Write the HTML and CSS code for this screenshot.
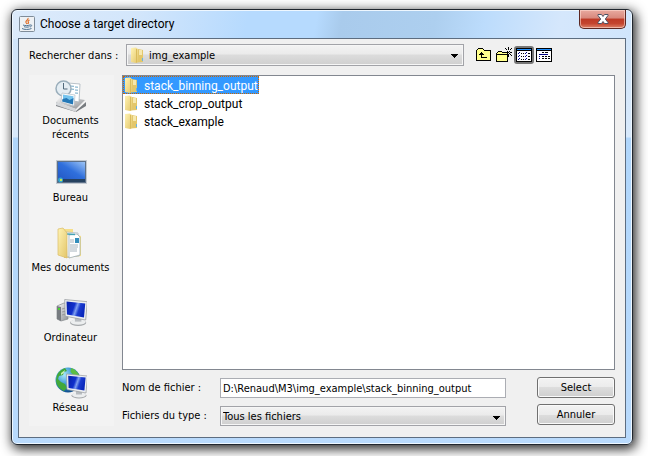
FILE: index.html
```html
<!DOCTYPE html>
<html lang="fr">
<head>
    <meta charset="utf-8">
    <title>Choose a target directory</title>
    <meta name="viewport" content="width=device-width, initial-scale=1.0">
    <link rel="stylesheet" href="styles.css">
</head>
<body>
    <!-- shared drawings -->
    <svg class="defs" width="0" height="0" aria-hidden="true">
        <defs>
            <linearGradient id="gold" x1="0" x2="1" y1="0" y2="1">
                <stop offset="0" stop-color="#fff3b4"/>
                <stop offset="1" stop-color="#e3c66a"/>
            </linearGradient>
            <linearGradient id="screen" x1="0" x2="1" y1="0" y2=".3">
                <stop offset="0" stop-color="#0920a8"/>
                <stop offset=".45" stop-color="#1030cc"/>
                <stop offset=".6" stop-color="#7f9ff0"/>
                <stop offset=".75" stop-color="#1a3cd0"/>
                <stop offset="1" stop-color="#0a28bd"/>
            </linearGradient>
            <linearGradient id="desk" x1="0" x2="1" y1="1" y2="0">
                <stop offset="0" stop-color="#2458c4"/>
                <stop offset=".5" stop-color="#2f6fdc"/>
                <stop offset="1" stop-color="#9cc4f6"/>
            </linearGradient>
            <linearGradient id="metal" x1="0" x2="1" y1="0" y2="1">
                <stop offset="0" stop-color="#fafafa"/>
                <stop offset="1" stop-color="#8d9094"/>
            </linearGradient>
            <radialGradient id="globe" cx=".35" cy=".3" r=".7">
                <stop offset="0" stop-color="#a8e6fb"/>
                <stop offset=".6" stop-color="#2d8fcf"/>
                <stop offset="1" stop-color="#11508f"/>
            </radialGradient>
            <symbol id="folder" viewBox="0 0 16 16">
                <path fill="#e3c76b" d="M8 2l5 1v12l-6 .6z"/>
                <path fill="#f6e8ae" d="M9 3h3v5H9z"/>
                <path fill="#c9a548" d="M7 2h1v13H7z"/>
                <path fill="url(#gold)" d="M1 1l5-.5L8 2v13l-2 1-5-1z"/>
                <path fill="#d9bb5c" d="M6 2h1v13.4l-1 .3z"/>
                <path fill="#6ab4e0" d="M12 11h1v3h-1z"/>
            </symbol>
            <symbol id="monitor" viewBox="0 0 22 26">
                <ellipse cx="13" cy="22" rx="7.5" ry="3" fill="#a5a8ab"/>
                <ellipse cx="13" cy="21.3" rx="7" ry="2.6" fill="#eceeef"/>
                <path fill="#b8bcc0" d="M10 17h6v4h-6z"/>
                <path fill="#eceff1" stroke="#96999d" stroke-width=".7" d="M.5.5l21 2-1.500 17L1 16z"/>
                <path fill="url(#screen)" d="M2.200 2.300l17.400 1.800-1.200 13L2.600 14.400z"/>
            </symbol>
        </defs>
    </svg>

    <div class="window" role="dialog" aria-labelledby="window-title">
        <header class="titlebar">
            <svg class="java-icon" viewBox="0 0 16 16" aria-hidden="true">
                <rect x=".5" y=".5" width="15" height="15" rx="1" fill="#eef1f4" stroke="#7f8c99"/>
                <path fill="none" stroke="#e0702a" stroke-width="1.200" d="M9 2c1 2-3 2.500-2 4.500L8 8M10.500 4C8.500 5 9 6 9.500 6.500L9 8"/>
                <path fill="none" stroke="#4f7394" d="M4 9c2 .8 5 .8 7 0M5 10.700c2 .6 4 .6 5.500 0M11 9c2.500-.5 2 1.500 0 2M3 12.500c2 1.300 7 1.300 9.500 0"/>
            </svg>
            <h1 class="title" id="window-title">Choose a target directory</h1>
            <button class="close" type="button" aria-label="Fermer">
                <svg width="12" height="10" viewBox="0 0 12 10" aria-hidden="true">
                    <path fill="#fff" stroke="#4d5264" d="M1 .5h3.500L6 2.500 7.500.5H11v1L8.300 5 11 8.500v1H7.500L6 7.500l-1.500 2H1v-1L3.700 5 1 1.500z"/>
                </svg>
            </button>
        </header>

        <main class="client">
            <div class="lookin">
                <label class="lookin-label" for="lookin">Rechercher dans :</label>
                <div class="combo combo-folder">
                    <svg class="combo-icon" width="16" height="16" aria-hidden="true"><use href="#folder"/></svg>
                    <select id="lookin">
                        <option>img_example</option>
                    </select>
                    <svg class="arrow" width="9" height="5" viewBox="0 0 9 5" aria-hidden="true"><path d="M1 0h7v1H7v1H6v1H5v1H4V3H3V2H2V1H1z"/></svg>
                </div>
                <div class="tools">
                    <button class="tool" type="button" aria-label="Dossier parent">
                        <svg width="16" height="14" viewBox="0 0 16 14" aria-hidden="true">
                            <path d="M2 0h5v1h1v1h7v11H0V2h1V1h1z"/>
                            <path fill="#ffff8c" d="M2 1h5v1h1v1h6v9H1V2h1z"/>
                            <path d="M5 4h1v1h1v1h1v1H6v2h5v1H5V7H3V6h1V5h1z"/>
                        </svg>
                    </button>
                    <button class="tool" type="button" aria-label="Nouveau dossier">
                        <svg width="16" height="16" viewBox="0 0 16 16" aria-hidden="true">
                            <path d="M1 5h1V4h4v1h6v10H0V6h1z"/>
                            <path fill="#ffff8c" d="M2 5h4v1h5v1H1V6h1zM1 8h10v6H1z"/>
                            <path d="M12 0h1v3h-1zM9 1h1v1H9zM10 2h1v1h-1zM11 4h1v1h-1zM13 4h1v1h-1zM14 2h1v1h-1zM15 1h1v1h-1zM8 5h2v1H8zM12 5h1v1h-1zM14 5h2v1h-2zM11 6h1v1h-1zM13 6h1v1h-1zM14 7h1v1h-1zM15 8h1v1h-1zM12 7h1v3h-1z"/>
                        </svg>
                    </button>
                    <button class="tool tool-on" type="button" aria-label="Liste" aria-pressed="true">
                        <svg width="16" height="14" viewBox="0 0 16 14" aria-hidden="true">
                            <path d="M0 0h16v14H0z"/>
                            <path fill="#1e90ff" d="M1 1h14v1H1z"/>
                            <path fill="#fff" d="M1 3h14v10H1z"/>
                            <path fill="#000080" d="M3 4h1v1H3zM2 5h1v1H2zM3 7h1v1H3zM2 8h1v1H2zM3 10h1v1H3zM2 11h1v1H2zM10 4h1v1h-1zM9 5h1v1H9zM10 7h1v1h-1zM9 8h1v1H9zM10 10h1v1h-1zM9 11h1v1H9z"/>
                            <path d="M5 5h1v1H5zM7 5h1v1H7zM5 8h1v1H5zM7 8h1v1H7zM5 11h1v1H5zM7 11h1v1H7zM12 5h2v1h-2zM12 8h2v1h-2zM12 11h2v1h-2z"/>
                        </svg>
                    </button>
                    <button class="tool" type="button" aria-label="Détails" aria-pressed="false">
                        <svg width="16" height="14" viewBox="0 0 16 14" aria-hidden="true">
                            <path d="M0 0h16v14H0z"/>
                            <path fill="#1e90ff" d="M1 1h14v1H1z"/>
                            <path fill="#fff" d="M1 3h14v10H1z"/>
                            <path d="M6 4h2v1H6zM9 4h3v1H9zM6 8h2v1H6zM9 8h2v1H9zM12 8h2v1h-2zM6 10h2v1H6zM9 10h2v1H9zM12 10h2v1h-2z"/>
                            <path fill="#000080" d="M3 6h9v1H3zM3 8h1v1H3zM3 10h1v1H3z"/>
                        </svg>
                    </button>
                </div>
            </div>

            <div class="content">
                <nav class="places" aria-label="Emplacements">
                    <button class="place" type="button">
                        <svg width="32" height="32" viewBox="0 0 32 32" aria-hidden="true">
                            <path fill="#777b7f" d="M1 22l20 9 10-9v4L21 32 1 26z"/>
                            <path fill="url(#metal)" d="M6 16l24 4-9 9L1 22z"/>
                            <path fill="#d4d7da" d="M1 22l20 7v3L1 25z"/>
                            <path fill="#fff" stroke="#a8b4bc" stroke-width=".8" d="M13 3l12 1-1 18-11-2z"/>
                            <path stroke="#6fa6c4" d="M15 6l4 .3M20 7l3 .2M15 9l4 .3M20 10l3 .2M20 13l3 .2"/>
                            <circle cx="8.500" cy="8.500" r="7.500" fill="#e4edf3" stroke="#9aaebb" stroke-width="1.500"/>
                            <path fill="none" stroke="#51697b" d="M8.500 3v6h4"/>
                            <path fill="#fff" stroke="#b1bcc4" stroke-width=".7" d="M7 13l13 2-1 11-13-4z"/>
                            <path fill="#75c4ee" d="M8 14.500l10.500 1.800-.3 4L8 20z"/>
                            <path fill="#2378b7" d="M7.500 19l4-1 3 2 4-2-.5 6.500L7 21.500z"/>
                        </svg>
                        <span>Documents<br>récents</span>
                    </button>
                    <button class="place" type="button">
                        <svg width="32" height="32" viewBox="0 0 32 32" aria-hidden="true">
                            <path fill="#c3c9d0" d="M1 3h31v24H1z"/>
                            <path fill="#5e7189" d="M2 4h29v22H2z"/>
                            <path fill="url(#desk)" d="M3 5h27v17H3z"/>
                            <path fill="#26415f" d="M3 22h27v3H3z"/>
                            <circle cx="5.500" cy="23" r="2.500" fill="#36a7ce"/>
                            <path fill="#c7e455" d="M5 22h2v2H5z"/>
                        </svg>
                        <span>Bureau</span>
                    </button>
                    <button class="place" type="button">
                        <svg width="32" height="32" viewBox="0 0 32 32" aria-hidden="true">
                            <path fill="#d8bd6a" d="M9 2l9 1v25l-9 3z"/>
                            <path fill="#f5df8b" d="M8 2h10v5l8 2v20l-14 2z"/>
                            <path fill="#fafbfc" stroke="#aab2b8" stroke-width=".7" d="M11 5l12 1 1 23-12 1z"/>
                            <path fill="#fff" stroke="#94a6af" stroke-width=".7" d="M14 8l8-1 3 3v18l-11 3z"/>
                            <path stroke="#44a1b5" stroke-width="1.500" d="M12 7l8 .5"/>
                            <path stroke="#a8b4bd" d="M15 13h4M15 15h4M15 18h8M15 20h8M15 22h7M15 24h7"/>
                            <path fill="#328dbb" d="M20 11h4v5h-4z"/>
                            <path fill="url(#gold)" stroke="#dabc65" stroke-width=".7" d="M3 2l5-1 4 5v25L3 28z"/>
                        </svg>
                        <span>Mes documents</span>
                    </button>
                    <button class="place" type="button">
                        <svg width="32" height="32" viewBox="0 0 32 32" aria-hidden="true">
                            <path fill="url(#metal)" stroke="#85898d" stroke-width=".7" d="M2 9l7-3 4 1v15l-7 2-4-2z"/>
                            <path fill="#777b80" d="M2 9l4 1v14l-4-2z"/>
                            <path fill="#48d42f" d="M3 11h2v2H3z"/>
                            <path stroke="#999" d="M7 12l4-1M7 15l4-1M7 18l4-1"/>
                            <use href="#monitor" x="9" y="2" width="24" height="28"/>
                        </svg>
                        <span>Ordinateur</span>
                    </button>
                    <button class="place" type="button">
                        <svg width="32" height="32" viewBox="0 0 32 32" aria-hidden="true">
                            <circle cx="13" cy="13" r="12.500" fill="url(#globe)"/>
                            <path fill="#42a83a" d="M2 8c2-4 5-6 8-7l2 3-3 1-1 3-4 1-1 3 3 3 4 2 2 4-3 3C5 22 1 19 1 13z"/>
                            <path fill="#5cbd43" d="M16 1c4 1 7 4 8.500 8l-6-1-3-3z"/>
                            <path fill="#c8efb0" d="M6 6l4-3-1 3-3 2z"/>
                            <use href="#monitor" x="11" y="6" width="22" height="27"/>
                        </svg>
                        <span>Réseau</span>
                    </button>
                </nav>

                <div class="browser">
                    <ul class="files" role="listbox" aria-label="Dossiers">
                        <li class="file selected" role="option" aria-selected="true"><svg width="16" height="16" aria-hidden="true"><use href="#folder"/></svg><span>stack_binning_output</span></li>
                        <li class="file" role="option" aria-selected="false"><svg width="16" height="16" aria-hidden="true"><use href="#folder"/></svg><span>stack_crop_output</span></li>
                        <li class="file" role="option" aria-selected="false"><svg width="16" height="16" aria-hidden="true"><use href="#folder"/></svg><span>stack_example</span></li>
                    </ul>

                    <form class="controls">
                        <div class="fields">
                            <label for="filename">Nom de fichier :</label>
                            <input class="filename" id="filename" type="text" value="D:\Renaud\M3\img_example\stack_binning_output">
                            <label for="filetype">Fichiers du type :</label>
                            <div class="combo">
                                <select id="filetype">
                                    <option>Tous les fichiers</option>
                                </select>
                                <svg class="arrow" width="9" height="5" viewBox="0 0 9 5" aria-hidden="true"><path d="M1 0h7v1H7v1H6v1H5v1H4V3H3V2H2V1H1z"/></svg>
                            </div>
                        </div>
                        <div class="actions">
                            <button class="btn" type="button">Select</button>
                            <button class="btn" type="button">Annuler</button>
                        </div>
                    </form>
                </div>
            </div>
        </main>
    </div>
</body>
</html>
```
FILE: styles.css
```css
* {
    box-sizing: border-box;
}
body {
    margin: 0;
    padding: 9px 15px 12px 11px;
    min-height: 100vh;
    display: flex;
    background: #fff;
    color: #000;
    font-family: "DejaVu Sans Condensed", "DejaVu Sans", sans-serif;
    font-size: 11px;
    line-height: 14px;
}
button, input, select {
    font: inherit;
    color: inherit;
    margin: 0;
}
svg {
    display: block;
    flex: none;
}
.defs {
    position: absolute;
}

/* window frame */
.window {
    flex: 1;
    display: flex;
    flex-direction: column;
    padding: 0 6px 6px;
    border: 1px solid #20262e;
    border-radius: 6px;
    background:
        linear-gradient(100deg, #dceafa 0, #d3e6fb 20%, #b6dafe 38%, #b6dafe 49%, #a9cbec 53%, #adcfef 68%, #bcdcfc 76%, #d5e7fc 88%, #d0e5fc 100%) 0 0 / 100% 29px no-repeat,
        linear-gradient(#cfe4fa 0, #d8e9fb 127px, #b0d6fb 128px, #b9dafc 100%);
    box-shadow: inset 0 0 0 1px #eef7ff, 2px 3px 12px 1px rgba(0, 0, 0, 0.85);
}
.titlebar {
    display: flex;
    align-items: flex-start;
    height: 28px;
    padding-left: 1px;
}
.java-icon {
    width: 16px;
    height: 16px;
    margin-top: 6px;
}
.title {
    flex: 1;
    margin: 5px 0 0 5px;
    font: 12px/18px Roboto, "Open Sans", sans-serif;
}
.close {
    display: flex;
    align-items: center;
    justify-content: center;
    width: 47px;
    height: 19px;
    padding: 0;
    border: 1px solid #5c2722;
    border-top: 0;
    border-radius: 0 0 5px 5px;
    background: linear-gradient(#e9aaa0 0, #d8887c 45%, #bd3a26 50%, #c4452f 75%, #dd8168 100%);
    box-shadow: inset 0 0 0 1px rgba(255, 220, 210, 0.6);
}

/* client area */
.client {
    flex: 1;
    display: flex;
    flex-direction: column;
    gap: 9px;
    padding: 5px 10px 11px;
    border: 1px solid #5d6d80;
    background: #f0f0f0;
}
.lookin {
    display: flex;
    align-items: center;
    padding-right: 61px;
}
.lookin-label {
    width: 97px;
    padding-top: 1px;
}
.combo {
    position: relative;
    flex: 1;
    height: 22px;
}
.combo select {
    appearance: none;
    display: block;
    width: 100%;
    height: 100%;
    padding: 1px 20px 0 2px;
    border: 1px solid #a2a3a8;
    border-radius: 0;
    background: linear-gradient(#f3f3f3 0, #ebebeb 45%, #dcdcdc 50%, #cfcfcf 100%);
    box-shadow: inset 0 0 0 1px #f6f6f6;
}
.combo-folder select {
    padding-left: 22px;
}
.combo-icon {
    position: absolute;
    top: 3px;
    left: 4px;
    pointer-events: none;
}
.arrow {
    position: absolute;
    top: 10px;
    right: 5px;
    pointer-events: none;
    shape-rendering: crispEdges;
}
.tools {
    display: flex;
    margin-left: 10px;
}
.tool {
    display: flex;
    align-items: center;
    justify-content: center;
    width: 20px;
    height: 18px;
    padding: 0;
    border: 0;
    background: none;
    shape-rendering: crispEdges;
}
.tool-on {
    border: 2px solid #777;
    border-radius: 3px;
    background: #ccc;
}

.content {
    flex: 1;
    display: flex;
    gap: 8px;
}
.places {
    width: 85px;
    padding: 1px 2px 0 0;
    background: #f3f3f3;
}
.place {
    display: flex;
    flex-direction: column;
    align-items: center;
    justify-content: center;
    gap: 2px;
    width: 100%;
    height: 70px;
    padding: 0;
    border: 0;
    background: none;
}

.browser {
    flex: 1;
    display: flex;
    flex-direction: column;
    gap: 7px;
}
.files {
    flex: 1;
    margin: 0;
    padding: 0;
    border: 1px solid #828790;
    background: #fff;
    list-style: none;
    font: 12px/18px Roboto, "Open Sans", sans-serif;
}
.file {
    display: flex;
    align-items: center;
    gap: 4px;
    width: max-content;
    height: 18px;
    padding: 0 1px;
}
.file span {
    padding-top: 1px;
}
.selected {
    background: #3399ff;
    color: #fff;
    outline: 1px dotted #cc6600;
    outline-offset: -1px;
}

.controls {
    display: flex;
    gap: 31px;
}
.fields {
    flex: 1;
    display: grid;
    grid-template-columns: 98px 1fr;
    row-gap: 8px;
    padding-top: 1px;
}
.fields label {
    padding-top: 3px;
}
.filename {
    width: 100%;
    height: 20px;
    padding: 1px 2px 0;
    border: 1px solid #abadb3;
    background: #fff;
}
.fields .combo {
    height: 20px;
}
.actions {
    display: flex;
    flex-direction: column;
    gap: 6px;
    width: 78px;
}
.btn {
    height: 21px;
    padding: 0;
    border: 1px solid #707070;
    border-radius: 3px;
    background: linear-gradient(#f3f3f3 0, #ebebeb 50%, #dddddd 50%, #cfcfcf 100%);
    box-shadow: inset 0 0 0 1px #fafafa;
}
```
